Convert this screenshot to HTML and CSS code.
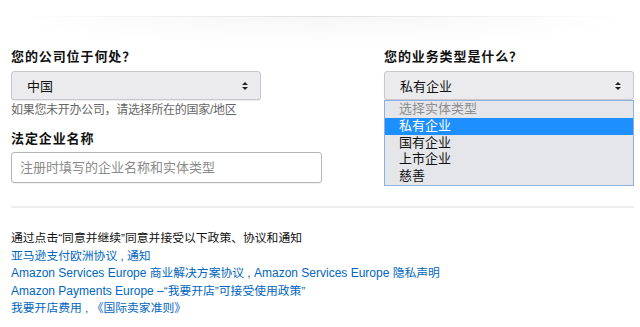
FILE: index.html
```html
<!DOCTYPE html>
<html lang="zh">
<head>
<meta charset="utf-8">
<link rel="stylesheet" href="styles.css">
</head>
<body>
<div class="topbar"></div>
<div class="shadow"></div>
<div class="form">
  <div class="col col-left">
    <div class="label">您的公司位于何处？</div>
    <div class="select">
      <span class="value">中国</span>
      <span class="arrows"><i class="up"></i><i class="down"></i></span>
    </div>
    <div class="hint">如果您未开办公司，请选择所在的国家/地区</div>
    <div class="label label-2">法定企业名称</div>
    <div class="input">注册时填写的企业名称和实体类型</div>
  </div>
  <div class="col col-right">
    <div class="label">您的业务类型是什么？</div>
    <div class="select select-open">
      <span class="value">私有企业</span>
      <span class="arrows"><i class="up"></i><i class="down"></i></span>
      <ul class="listbox">
        <li class="opt disabled">选择实体类型</li>
        <li class="opt selected">私有企业</li>
        <li class="opt">国有企业</li>
        <li class="opt">上市企业</li>
        <li class="opt">慈善</li>
      </ul>
    </div>
  </div>
</div>
<div class="divider"></div>
<div class="terms">
  <p class="intro">通过点击“同意并继续”同意并接受以下政策、协议和通知</p>
  <p><a href="#">亚马逊支付欧洲协议</a> , <a href="#">通知</a></p>
  <p><a href="#"><span class="en">Amazon Services Europe</span> 商业解决方案协议</a> <span class="en">,</span> <a href="#"><span class="en">Amazon Services Europe</span> 隐私声明</a></p>
  <p><a href="#"><span class="en">Amazon Payments Europe –</span>“我要开店”可接受使用政策”</a></p>
  <p><a href="#">我要开店费用</a> , <a href="#">《国际卖家准则》</a></p>
</div>
</body>
</html>
```
FILE: styles.css
```css
* { box-sizing: border-box; }
html, body { margin: 0; padding: 0; background: #fff; }
body {
  width: 640px;
  height: 327px;
  overflow: hidden;
  font-family: "Liberation Sans", Arial, "Noto Sans CJK SC", sans-serif;
  color: #111;
}
.topbar { height: 16px; }
.shadow {
  height: 30px;
  background:
    linear-gradient(to right, rgba(0,0,0,0) 3%, rgba(0,0,0,0.09) 50%, rgba(0,0,0,0) 97%) top / 100% 1px no-repeat,
    radial-gradient(ellipse 50% 100% at 50% 0%, rgba(0,0,0,0.035), rgba(0,0,0,0) 100%);
}
.form {
  display: flex;
  padding: 3px 0 0 11px;
  height: 160px;
}
.col-left { width: 311px; }
.col-right { width: 250px; margin-left: 62px; }
.label {
  font-size: 13px;
  font-weight: bold;
  line-height: 16px;
  height: 16px;
  letter-spacing: 0.9px;
}
.select {
  position: relative;
  width: 250px;
  height: 29px;
  margin-top: 6px;
  border: 1px solid #c8c8cc;
  border-radius: 3px;
  background: #ebebee;
  box-shadow: 0 1px 1px rgba(0,0,0,0.08);
  display: flex;
  align-items: center;
  padding-left: 15px;
  font-size: 13px;
}
.select .value { flex: 1; }
.arrows {
  display: flex;
  flex-direction: column;
  gap: 2px;
  margin-right: 12px;
}
.arrows i {
  display: block;
  width: 0; height: 0;
  border-left: 3px solid transparent;
  border-right: 3px solid transparent;
}
.arrows .up { border-bottom: 3px solid #222; }
.arrows .down { border-top: 3px solid #222; }
.hint {
  font-size: 12px;
  line-height: 16px;
  color: #666;
  margin-top: 2px;
  letter-spacing: -0.3px;
}
.label-2 { margin-top: 13px; }
.input {
  margin-top: 5px;
  width: 311px;
  height: 31px;
  border: 1px solid #b5b5b5;
  border-radius: 3px;
  padding-left: 8px;
  font-size: 13px;
  line-height: 29px;
  color: #8a8a8a;
  box-shadow: 0 1px 0 rgba(0,0,0,0.05);
}
.listbox {
  position: absolute;
  left: -1px;
  top: 28px;
  width: 250px;
  margin: 0;
  padding: 0;
  list-style: none;
  background: #e5e6ea;
  border: 1px solid #8fb0e0;
}
.opt {
  height: 16.8px;
  line-height: 16.8px;
  font-size: 13px;
  padding-left: 14px;
  color: #111;
}
.opt.disabled { color: #8d8d8d; }
.opt.selected { background: #1e8fff; color: #fff; }
.divider {
  margin: 0 6px 0 11px;
  height: 2px;
  background: #eeeeee;
}
.terms {
  padding: 22px 0 0 11px;
  font-size: 11.8px;
  line-height: 17.2px;
}
.terms p { margin: 0; white-space: nowrap; color: #0066c0; height: 17.5px; }
.terms p.intro { color: #111; }
.terms a { color: #0066c0; text-decoration: none; }
.terms .en { font-size: 12px; }
```
